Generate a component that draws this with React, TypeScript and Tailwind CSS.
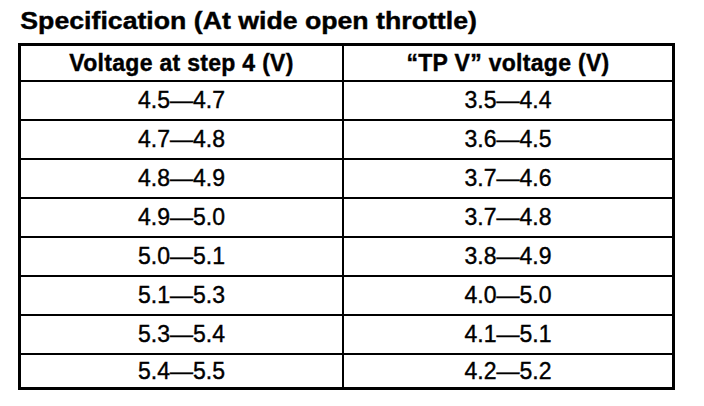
import React from "react";

const rows: [string, string][] = [
  ["4.5—4.7", "3.5—4.4"],
  ["4.7—4.8", "3.6—4.5"],
  ["4.8—4.9", "3.7—4.6"],
  ["4.9—5.0", "3.7—4.8"],
  ["5.0—5.1", "3.8—4.9"],
  ["5.1—5.3", "4.0—5.0"],
  ["5.3—5.4", "4.1—5.1"],
  ["5.4—5.5", "4.2—5.2"],
];

export default function App() {
  return (
    <div className="w-[704px] h-[406px] bg-white pl-[18px] pt-[10px] text-black font-['Liberation_Sans',Arial,sans-serif] overflow-hidden">
      <div className="h-[22px] leading-[22px] text-[23px] font-bold whitespace-nowrap origin-left scale-x-[1.16] pl-[2px] [-webkit-text-stroke:0.4px_black]">
        Specification (At wide open throttle)
      </div>
      <div className="mt-[11px] w-[657px] border-[3px] border-black">
        <div className="flex h-[36px] border-b-2 border-black text-[23px] font-bold tracking-[0.3px] leading-none [-webkit-text-stroke:0.4px_black]">
          <div className="w-[323px] border-r-2 border-black flex items-center justify-center">
            Voltage at step 4 (V)
          </div>
          <div className="flex-1 flex items-center justify-center">
            “TP V” voltage (V)
          </div>
        </div>
        {rows.map(([a, b], i) => (
          <div
            key={i}
            className={
              i === rows.length - 1
                ? "flex h-[32px] text-[23px] leading-none [-webkit-text-stroke:0.4px_black]"
                : "flex h-[39px] border-b-2 border-black text-[23px] leading-none [-webkit-text-stroke:0.4px_black]"
            }
          >
            <div className="w-[323px] border-r-2 border-black flex items-center justify-center">
              {a}
            </div>
            <div className="flex-1 flex items-center justify-center">{b}</div>
          </div>
        ))}
      </div>
    </div>
  );
}
